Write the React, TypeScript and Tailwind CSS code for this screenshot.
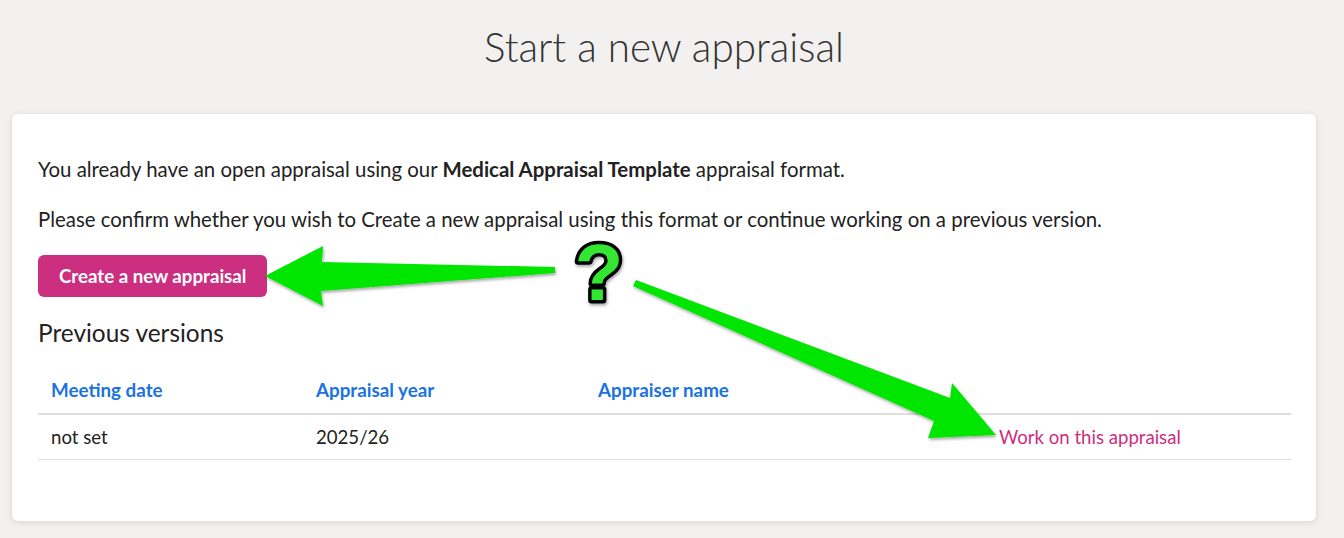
import React from 'react';

const rows = [{ date: 'not set', year: '2025/26', appraiser: '' }];

const Arrows = () => (
    <svg className="absolute inset-0 pointer-events-none" width="1344" height="538" viewBox="0 0 1344 538">
        <defs>
            <filter id="shadow" x="-10%" y="-30%" width="120%" height="160%">
                <feDropShadow dx="1" dy="2" stdDeviation="1.5" floodColor="#000" floodOpacity="0.35" />
            </filter>
        </defs>
        {/* left arrow -> button */}
        <polygon
            filter="url(#shadow)"
            fill="#00e600"
            points="555,267 322,262 323,246 265,276 323,306 321,291 555,273"
        />
        {/* right arrow -> link */}
        <polygon
            filter="url(#shadow)"
            fill="#00e600"
            points="636,280 950,398 952,383 996,435 928,438 934,421 633,286"
        />
        {/* question mark */}
        <text
            x="599"
            y="300"
            textAnchor="middle"
            fontFamily="'Liberation Sans', Arial, sans-serif"
            fontWeight="bold"
            fontSize="80"
            fill="#33e633"
            stroke="#000"
            strokeWidth="7"
            strokeLinejoin="round"
            paintOrder="stroke"
            filter="url(#shadow)"
        >
            ?
        </text>
    </svg>
);

export default function App() {
    return (
        <div className="relative w-[1344px] h-[538px] bg-[#f2f1ef] overflow-hidden" style={{ fontFamily: "Lato, 'Open Sans', sans-serif" }}>
            <div className="w-[1328px]">
                <h1 className="pt-[23px] text-center text-[40.4px] leading-[48px] font-light text-[#333]">Start a new appraisal</h1>

                <div className="mx-3 mt-[43px] bg-white rounded-md shadow-[0_1px_6px_rgba(0,0,0,0.12)] pl-[26px] pr-[25px] pt-10 pb-[61px] text-[#222]">
                    <p className="text-[20.4px] leading-[30px]">
                        You already have an open appraisal using our <span className="font-bold">Medical Appraisal Template</span> appraisal format.
                    </p>
                    <p className="mt-5 text-[20.4px] leading-[30px]">
                        Please confirm whether you wish to Create a new appraisal using this format or continue working on a previous version.
                    </p>

                    <button className="mt-[21px] h-[42px] px-[21px] rounded-md bg-[#cc2e80] text-white font-bold text-[18.7px]">
                        Create a new appraisal
                    </button>

                    <h2 className="mt-[18px] text-[24.4px] leading-[36px] text-[#222]">Previous versions</h2>

                    <div className="mt-[15px] text-[18.6px] leading-[27px]">
                        <div className="grid grid-cols-[265px_282px_401px_1fr] border-b-2 border-[#e0dfdb] font-bold text-[18.8px] text-[#1a73e0]">
                            <div className="px-[13px] pt-[10px] pb-[10px]">Meeting date</div>
                            <div className="px-[13px] pt-[10px] pb-[10px]">Appraisal year</div>
                            <div className="px-[13px] pt-[10px] pb-[10px]">Appraiser name</div>
                            <div />
                        </div>
                        {rows.map((r, i) => (
                            <div key={i} className="grid grid-cols-[265px_282px_401px_1fr] border-b border-[#e0dfdb] text-[#222]">
                                <div className="px-[13px] pt-[9px] pb-[8px]">{r.date}</div>
                                <div className="px-[13px] pt-[9px] pb-[8px]">{r.year}</div>
                                <div className="px-[13px] pt-[9px] pb-[8px]">{r.appraiser}</div>
                                <div className="px-[13px] pt-[9px] pb-[8px] text-[#cc2e80]">Work on this appraisal</div>
                            </div>
                        ))}
                    </div>
                </div>
            </div>

            <Arrows />
        </div>
    );
}
